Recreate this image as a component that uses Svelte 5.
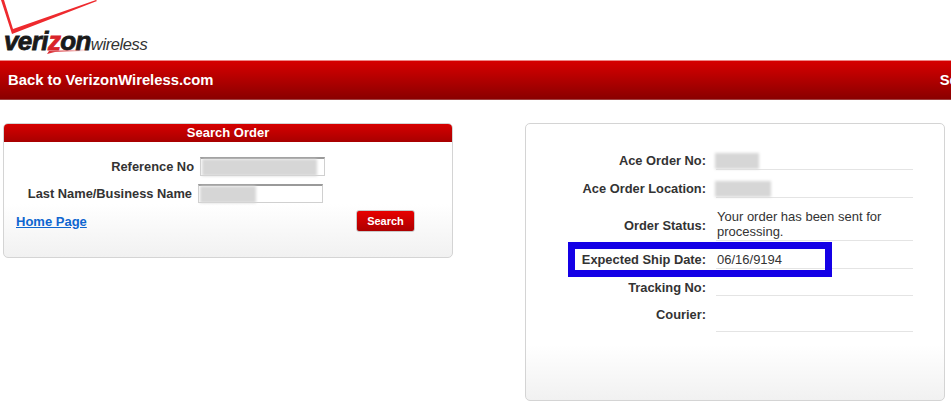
<script lang="ts">
  type Row = { label: string; value?: string; blur?: number; height: number };

  const rows: Row[] = [
    { label: "Ace Order No:", blur: 44, height: 28 },
    { label: "Ace Order Location:", blur: 56, height: 28 },
    { label: "Order Status:", value: "Your order has been sent for processing.", height: 43 },
    { label: "Expected Ship Date:", value: "06/16/9194", height: 28 },
    { label: "Tracking No:", height: 27 },
    { label: "Courier:", height: 36 },
  ];
</script>

<div class="page">
  <header class="logo">
    <svg class="check" width="100" height="36" viewBox="0 0 100 36" aria-hidden="true">
      <path d="M1 0 L4 0 L13 29 L96 0 L97 1 L12 34 Z" fill="#ee2a2e" />
    </svg>
    <div class="wordmark">
      <span class="vz">veri<span class="z">z</span>on</span><span class="wl">wireless</span>
    </div>
    <svg class="swoosh" width="42" height="6" viewBox="0 0 42 6" aria-hidden="true">
      <defs>
        <linearGradient id="fade">
          <stop offset="0" stop-color="#d8232a" />
          <stop offset="1" stop-color="#d8232a" stop-opacity="0" />
        </linearGradient>
      </defs>
      <path d="M0 6 L2 3 L42 1 L40 3 L8 4 Z" fill="url(#fade)" />
    </svg>
  </header>

  <nav class="band">
    <a href="#back">Back to VerizonWireless.com</a>
    <a href="#search">Search</a>
  </nav>

  <main class="columns">
    <section class="card search">
      <h2>Search Order</h2>
      <div class="field first">
        <label for="ref">Reference No</label>
        <div class="input">
          <input id="ref" type="text" />
          <span class="smear ref"></span>
        </div>
      </div>
      <div class="field second">
        <label for="name">Last Name/Business Name</label>
        <div class="input">
          <input id="name" type="text" />
          <span class="smear name"></span>
        </div>
      </div>
      <div class="actions">
        <a href="#home">Home Page</a>
        <button type="button">Search</button>
      </div>
    </section>

    <section class="card result">
      {#each rows as row}
        <div class="row" style:height="{row.height}px">
          <div class="label" class:tall={row.height > 40}>{row.label}</div>
          <div class="value">
            {#if row.blur}
              <span class="smear" style:width="{row.blur}px"></span>
            {:else if row.value}
              {row.value}
            {/if}
          </div>
        </div>
      {/each}
      <div class="highlight"></div>
    </section>
  </main>
</div>

<style>
  :global(body) {
    margin: 0;
    background: #fff;
  }

  .page {
    width: 951px;
    height: 405px;
    overflow: hidden;
    font-family: "Liberation Sans", Arial, sans-serif;
    color: #333;
  }

  .logo {
    position: relative;
    height: 60px;
  }

  .check {
    position: absolute;
    left: 0;
    top: 0;
  }

  .swoosh {
    position: absolute;
    left: 47px;
    top: 48px;
  }

  .wordmark {
    position: absolute;
    left: 4px;
    top: 26px;
    display: flex;
    align-items: baseline;
    white-space: nowrap;
    color: #1a1a1a;
  }

  .vz {
    font-size: 26px;
    font-weight: 700;
    font-style: italic;
    letter-spacing: -0.6px;
    -webkit-text-stroke: 0.8px #1a1a1a;
  }

  .z {
    color: #d8232a;
    -webkit-text-stroke: 0.8px #d8232a;
  }

  .wl {
    font-size: 16.5px;
    font-style: italic;
    letter-spacing: -0.4px;
    color: #333;
  }

  .band {
    height: 40px;
    box-sizing: border-box;
    display: flex;
    justify-content: space-between;
    align-items: center;
    padding-left: 8px;
    margin-right: -38px;
    background: linear-gradient(#d60000, #c00000 30%, #8a0000);
    border-top: 1px solid #e88;
    border-bottom: 1px solid #a04040;
  }

  .band a {
    color: #fff;
    font-size: 14.8px;
    font-weight: 700;
    text-decoration: none;
  }

  .columns {
    display: flex;
    align-items: flex-start;
    padding: 23px 0 0 3px;
  }

  .card {
    box-sizing: border-box;
    border: 1px solid #d4d4d4;
    border-radius: 5px;
  }

  .search {
    width: 450px;
    height: 135px;
    overflow: hidden;
    background: linear-gradient(#fff 60%, #f1f1f1);
  }

  h2 {
    margin: 0;
    height: 18px;
    line-height: 17px;
    font-size: 13px;
    font-weight: 700;
    text-align: center;
    color: #fff;
    background: linear-gradient(#d60000, #a80000);
  }

  .field {
    display: flex;
    align-items: center;
    justify-content: flex-end;
    height: 20px;
  }

  .field label {
    font-size: 12.85px;
    font-weight: 700;
  }

  .first {
    margin-top: 14px;
    padding-right: 127px;
  }

  .second {
    margin-top: 7px;
    padding-right: 129px;
  }

  .input {
    position: relative;
    margin-left: 6px;
    width: 125px;
    height: 19px;
  }

  input {
    display: block;
    box-sizing: border-box;
    width: 100%;
    height: 100%;
    margin: 0;
    padding: 0;
    background: #fff;
    border: 1px solid #d0d0d0;
    border-top: 2px solid #9a9a9a;
    border-radius: 0;
  }

  .smear {
    display: block;
    height: 16px;
    background: #d6d6d6;
    filter: blur(1.5px);
  }

  .input .smear {
    position: absolute;
    top: 2px;
    left: 2px;
    height: 17px;
  }

  .smear.ref {
    width: 115px;
  }

  .smear.name {
    width: 56px;
  }

  .actions {
    display: flex;
    align-items: center;
    justify-content: space-between;
    margin-top: 7px;
    padding: 0 37px 0 12px;
  }

  .actions a {
    color: #0f66d0;
    font-size: 13px;
    font-weight: 700;
  }

  button {
    width: 59px;
    height: 22px;
    padding: 0;
    border: 1px solid #c9c9c9;
    border-radius: 3px;
    color: #fff;
    font-family: inherit;
    font-size: 11px;
    font-weight: 700;
    background: linear-gradient(#e80000, #ac0000);
  }

  .result {
    position: relative;
    width: 420px;
    height: 278px;
    margin-left: 72px;
    padding-top: 18px;
    background: linear-gradient(#fff 80%, #f1f1f1);
  }

  .row {
    display: flex;
    box-sizing: border-box;
    font-size: 12.85px;
    line-height: 15px;
  }

  .label {
    width: 180px;
    flex: none;
    padding-top: 11px;
    text-align: right;
    font-weight: 700;
  }

  .label.tall {
    padding-top: 20px;
  }

  .value {
    box-sizing: border-box;
    width: 197px;
    margin-left: 10px;
    padding: 11px 0 0 1px;
    border-bottom: 1px solid #e4e4e4;
    font-size: 13px;
  }

  .value .smear {
    margin-left: -2px;
  }

  .highlight {
    position: absolute;
    left: 42px;
    top: 118px;
    width: 250px;
    height: 21px;
    border: 7px solid #1400e6;
  }
</style>
